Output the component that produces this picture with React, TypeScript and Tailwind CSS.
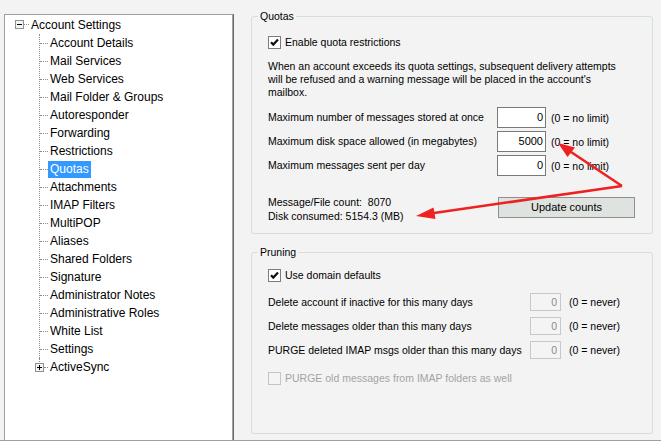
const treeItems = [
  "Account Details",
  "Mail Services",
  "Web Services",
  "Mail Folder & Groups",
  "Autoresponder",
  "Forwarding",
  "Restrictions",
  "Quotas",
  "Attachments",
  "IMAP Filters",
  "MultiPOP",
  "Aliases",
  "Shared Folders",
  "Signature",
  "Administrator Notes",
  "Administrative Roles",
  "White List",
  "Settings",
];

const Checkbox = ({ checked, disabled }: { checked?: boolean; disabled?: boolean }) => (
  <svg width="13" height="13" viewBox="0 0 13 13" className="shrink-0">
    <rect
      x="0.5"
      y="0.5"
      width="12"
      height="12"
      fill={disabled ? "#f4f4f4" : "#ffffff"}
      stroke={disabled ? "#c4c4c4" : "#7c7c7c"}
    />
    {checked && (
      <polyline points="3,6.2 5.3,8.6 10,3.6" fill="none" stroke="#111" strokeWidth="2.2" />
    )}
  </svg>
);

const GroupBox = ({ title, className, children }: { title: string; className: string; children: React.ReactNode }) => (
  <div className={`relative border border-[#d3dde4] rounded-[3px] ${className}`}>
    <span className="absolute left-[6px] top-[-8px] px-[2px] leading-[14px] bg-[#f3f3f3]">{title}</span>
    {children}
  </div>
);

const QuotaRow = ({ label, value }: { label: string; value: string }) => (
  <div className="flex items-center h-[21px]">
    <span className="w-[229px] whitespace-nowrap">{label}</span>
    <div className="w-[49px] h-[21px] border border-[#7a7a7a] bg-white flex items-center justify-end pr-[2px] text-[11px]">
      {value}
    </div>
    <span className="ml-[5px] mt-[2px]">(0 = no limit)</span>
  </div>
);

const PruneRow = ({ label }: { label: string }) => (
  <div className="flex items-center h-[18px]">
    <span className="w-[262px] whitespace-nowrap">{label}</span>
    <div className="w-[31px] h-[18px] border border-[#c8c8c8] bg-[#f4f4f4] text-[#8a8a8a] flex items-center justify-end pr-[3px]">
      0
    </div>
    <span className="ml-[8px]">(0 = never)</span>
  </div>
);

export default function App() {
  return (
    <div className="relative w-[661px] h-[441px] bg-[#f3f3f3] flex overflow-hidden border-b border-[#a0a0a0] font-['Liberation_Sans',Arial,sans-serif] text-black">
      {/* tree */}
      <div className="flex pl-[4px] pt-[14px] h-full">
        <div className="w-[229px] h-full bg-white border border-b-0 border-[#a0a0a0] text-[12px]">
          <div className="flex items-center h-[19px]">
            <div className="ml-[10px] w-[9px] h-[9px] border border-[#919191] bg-[#f4f4f4] flex items-center justify-center">
              <div className="w-[5px] h-[1px] bg-black" />
            </div>
            <span className="w-[5px] border-t border-dotted border-[#8c8c8c]" />
            <span className="px-[2px]">Account Settings</span>
          </div>
          <div className="ml-[34px] border-l border-dotted border-[#8c8c8c]">
            {treeItems.map((item) => (
              <div key={item} className="flex items-center h-[18px]">
                <span className="w-[8px] border-t border-dotted border-[#8c8c8c]" />
                <span
                  className={`px-[2px] h-[17px] flex items-center ${
                    item === "Quotas" ? "bg-[#3399ff] text-white" : ""
                  }`}
                >
                  {item}
                </span>
              </div>
            ))}
          </div>
          <div className="relative flex items-center h-[18px] ml-[30px]">
            <span className="absolute left-[4px] top-0 h-[4px] border-l border-dotted border-[#8c8c8c]" />
            <div className="w-[9px] h-[9px] border border-[#919191] bg-[#f4f4f4] flex items-center justify-center relative">
              <div className="w-[5px] h-[1px] bg-black" />
              <div className="absolute w-[1px] h-[5px] bg-black" />
            </div>
            <span className="w-[4px] border-t border-dotted border-[#8c8c8c]" />
            <span className="px-[2px]">ActiveSync</span>
          </div>
        </div>
        <div className="w-[1px] h-full bg-[#6a6a6a]" />
      </div>

      {/* right panel */}
      <div className="flex flex-col pl-[17px] pt-[16px] text-[10.5px] leading-[13px]">
        <GroupBox title="Quotas" className="w-[402px] h-[218px] pl-[16px]">
          <div className="flex items-center mt-[19px] h-[13px]">
            <Checkbox checked />
            <span className="ml-[4px]">Enable quota restrictions</span>
          </div>
          <p className="mt-[11px] w-[358px]">
            When an account exceeds its quota settings, subsequent delivery attempts will be refused and a
            warning message will be placed in the account's mailbox.
          </p>
          <div className="flex flex-col gap-[3px] mt-[8px]">
            <QuotaRow label="Maximum number of messages stored at once" value="0" />
            <QuotaRow label="Maximum disk space allowed (in megabytes)" value="5000" />
            <QuotaRow label="Maximum messages sent per day" value="0" />
          </div>
          <div className="flex mt-[19px]">
            <div className="w-[230px] leading-[14px]">
              <div>Message/File count:&nbsp; 8070</div>
              <div>Disk consumed: 5154.3 (MB)</div>
            </div>
            <button className="mt-[2px] w-[137px] h-[21px] bg-[#dfe3df] border border-[#8e8f8f] text-[11px]">
              Update counts
            </button>
          </div>
        </GroupBox>

        <GroupBox title="Pruning" className="mt-[18px] w-[402px] h-[182px] pl-[16px]">
          <div className="flex items-center mt-[16px] h-[13px]">
            <Checkbox checked />
            <span className="ml-[4px]">Use domain defaults</span>
          </div>
          <div className="flex flex-col gap-[6px] mt-[11px]">
            <PruneRow label="Delete account if inactive for this many days" />
            <PruneRow label="Delete messages older than this many days" />
            <PruneRow label="PURGE deleted IMAP msgs older than this many days" />
          </div>
          <div className="flex items-center mt-[13px] h-[13px]">
            <Checkbox disabled />
            <span className="ml-[4px] text-[#a3a3a3]">PURGE old messages from IMAP folders as well</span>
          </div>
        </GroupBox>
      </div>

      {/* annotation arrows */}
      <svg className="absolute inset-0 pointer-events-none" width="661" height="441">
        <line x1="622" y1="186" x2="571" y2="152" stroke="#ee2020" strokeWidth="2.5" />
        <polygon points="558,143 575,147.5 567.5,157" fill="#ee2020" />
        <line x1="622" y1="186" x2="434" y2="213" stroke="#ee2020" strokeWidth="2.5" />
        <polygon points="416,216 433.5,207.5 435.5,219" fill="#ee2020" />
      </svg>
    </div>
  );
}
